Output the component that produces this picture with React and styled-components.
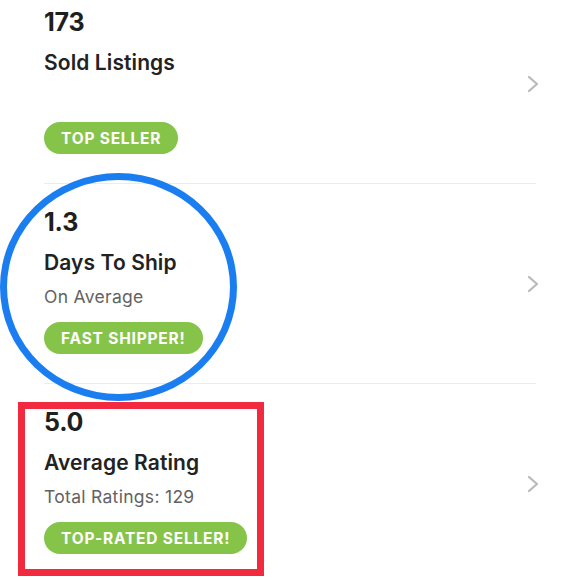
import React from "react";
import styled, { createGlobalStyle } from "styled-components";

const Global = createGlobalStyle`
  html, body { margin: 0; padding: 0; background: #fff; }
  body { font-family: Inter, "Open Sans", "Liberation Sans", sans-serif; }
`;

const Page = styled.div`
  position: relative;
  width: 580px;
  height: 580px;
  overflow: hidden;
  background: #fff;
`;

const List = styled.div`
  display: flex;
  flex-direction: column;
  margin: -16px 44px 0 44px;
`;

const Item = styled.div`
  display: flex;
  align-items: flex-start;
  justify-content: space-between;
  height: 200px;
  box-sizing: border-box;
  border-bottom: 1px solid #ececec;
`;

const Content = styled.div`
  display: flex;
  flex-direction: column;
  align-items: flex-start;
  padding-top: 22px;
`;

const Value = styled.div`
  font-size: 25px;
  line-height: 32px;
  font-weight: 700;
  color: #1f1f1f;
  letter-spacing: -0.2px;
`;

const Title = styled.div`
  margin-top: 11px;
  font-size: 21px;
  line-height: 28px;
  font-weight: 600;
  color: #222;
  letter-spacing: 0.1px;
`;

const Sub = styled.div`
  margin-top: 8px;
  min-height: 24px;
  font-size: 17.5px;
  line-height: 24px;
  color: #626262;
  letter-spacing: 0.3px;
`;

const Badge = styled.div`
  margin-top: 13px;
  height: 32px;
  padding: 0 17px;
  border-radius: 16px;
  background: #86c449;
  color: #fff;
  font-size: 15.5px;
  font-weight: 700;
  letter-spacing: 0.8px;
  display: flex;
  align-items: center;
`;

const Chevron = styled.svg`
  align-self: center;
  width: 14px;
  height: 20px;
  margin-right: -4px;
  flex: none;
`;

const Circle = styled.div`
  position: absolute;
  left: 0;
  top: 173px;
  width: 237px;
  height: 228px;
  box-sizing: border-box;
  border: 7px solid #1b7ef0;
  border-radius: 50%;
`;

const Rect = styled.div`
  position: absolute;
  left: 18px;
  top: 402px;
  width: 246px;
  height: 174px;
  box-sizing: border-box;
  border: 7px solid #f12a40;
`;

const items = [
  { value: "173", title: "Sold Listings", sub: "", badge: "TOP SELLER" },
  { value: "1.3", title: "Days To Ship", sub: "On Average", badge: "FAST SHIPPER!" },
  { value: "5.0", title: "Average Rating", sub: "Total Ratings: 129", badge: "TOP-RATED SELLER!" },
];

export default function App() {
  return (
    <Page>
      <Global />
      <List>
        {items.map((it) => (
          <Item key={it.value}>
            <Content>
              <Value>{it.value}</Value>
              <Title>{it.title}</Title>
              <Sub>{it.sub}</Sub>
              <Badge>{it.badge}</Badge>
            </Content>
            <Chevron viewBox="0 0 14 20">
              <path d="M3 3 L11 10 L3 17" fill="none" stroke="#b9b9b9" strokeWidth="2.2" strokeLinecap="round" strokeLinejoin="round" />
            </Chevron>
          </Item>
        ))}
      </List>
      <Circle />
      <Rect />
    </Page>
  );
}
